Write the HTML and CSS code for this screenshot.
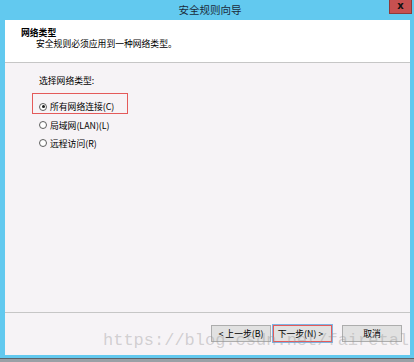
FILE: index.html
```html
<!DOCTYPE html>
<html lang="zh-CN">
<head>
    <meta charset="UTF-8">
    <title>安全规则向导</title>
    <link rel="stylesheet" href="styles.css">
</head>
<body>

    <div class="window">
        <div class="titlebar">
            <span class="title">安全规则向导</span>
            <div class="close">x</div>
        </div>

        <div class="client">
            <div class="header">
                <div class="header-title">网络类型</div>
                <div class="header-desc">安全规则必须应用到一种网络类型。</div>
            </div>

            <div class="content">
                <div class="label">选择网络类型:</div>
                <div class="options">
                    <div class="option marked">
                        <span class="radio checked"></span>所有网络连接(C)
                    </div>
                    <div class="option">
                        <span class="radio"></span>局域网(LAN)(L)
                    </div>
                    <div class="option">
                        <span class="radio"></span>远程访问(R)
                    </div>
                </div>
            </div>

            <div class="footer">
                <div class="btn">&lt; 上一步(B)</div>
                <div class="btn primary">下一步(N) &gt;</div>
                <div class="btn cancel">取消</div>
                <div class="watermark">https://blog.csdn.net/fairetal</div>
            </div>
        </div>
    </div>
    <div class="taskbar"></div>

</body>
</html>
```

FILE: styles.css
```css
body {
    margin: 0;
    padding: 0;
    width: 414px;
    height: 362px;
    overflow: hidden;
    font-family: "Noto Sans CJK SC", "Liberation Sans", sans-serif;
    font-size: 8.8px;
    color: #000;
    background-color: #8a9096;
}

.window {
    display: flex;
    flex-direction: column;
    height: 358px;
    background-color: #62c9ef;
    padding: 0 4px 3px 5px;
    box-sizing: border-box;
}

.titlebar {
    position: relative;
    height: 20px;
    display: flex;
    align-items: center;
    justify-content: center;
}

.title {
    font-size: 10.5px;
    color: #1b2b3a;
    margin-left: 5px;
    margin-bottom: 1px;
}

.close {
    position: absolute;
    top: 0;
    right: -2px;
    width: 21px;
    height: 13px;
    background-color: #c75050;
    border: 1px solid #8e3a3a;
    border-top: none;
    color: #111;
    font-family: "DejaVu Sans", sans-serif;
    font-weight: bold;
    font-size: 10px;
    line-height: 12px;
    text-align: center;
}

.client {
    flex: 1;
    display: flex;
    flex-direction: column;
    background-color: #f6f3f6;
}

.header {
    height: 43px;
    background-color: #ffffff;
    border-bottom: 1px solid #c6c6c6;
    padding: 7px 0 0 16px;
    box-sizing: border-box;
}

.header-title {
    font-weight: bold;
    line-height: 12px;
}

.header-desc {
    padding-left: 15px;
    line-height: 12px;
    margin-top: -1px;
}

.content {
    flex: 1;
    padding: 11px 0 0 27px;
    border-bottom: 1px solid #c6c6c6;
}

.label {
    padding-left: 7px;
    line-height: 14px;
}

.options {
    margin-top: 5px;
    display: flex;
    flex-direction: column;
}

.option {
    display: flex;
    align-items: center;
    width: 88px;
    height: 16px;
    padding-left: 6px;
    border: 1px solid transparent;
}

.option.marked {
    height: 13px;
    padding-top: 6px;
    border-color: #e45a5a;
    margin-bottom: 2px;
}

.radio {
    width: 6px;
    height: 6px;
    border: 1px solid #5e5e5e;
    border-radius: 50%;
    background-color: #ffffff;
    margin-right: 3px;
    position: relative;
}

.radio.checked::after {
    content: "";
    position: absolute;
    left: 1.5px;
    top: 1.5px;
    width: 3px;
    height: 3px;
    border-radius: 50%;
    background-color: #1a1a1a;
}

.footer {
    position: relative;
    height: 42px;
    display: flex;
    justify-content: flex-end;
    align-items: flex-start;
    padding: 12px 8px 0 0;
    box-sizing: border-box;
}

.btn {
    width: 58px;
    height: 15px;
    border: 1px solid #adadad;
    background-color: #e1e1e1;
    text-align: center;
    line-height: 15px;
    color: #000;
}

.btn.primary {
    border: 1px solid #e45a5a;
    box-shadow: 0 0 0 1px #7fb5e3;
    margin-left: 2px;
    width: 53px;
    padding-right: 4px;
}

.btn.cancel {
    margin-left: 10px;
}

.watermark {
    position: absolute;
    left: 98px;
    top: 18px;
    font-family: "Liberation Mono", monospace;
    font-size: 17px;
    color: rgba(150, 150, 150, 0.4);
    white-space: nowrap;
}

.taskbar {
    height: 4px;
    border-top: 1px solid #5b6269;
    background-color: #9aa0a6;
    box-sizing: border-box;
}
```
